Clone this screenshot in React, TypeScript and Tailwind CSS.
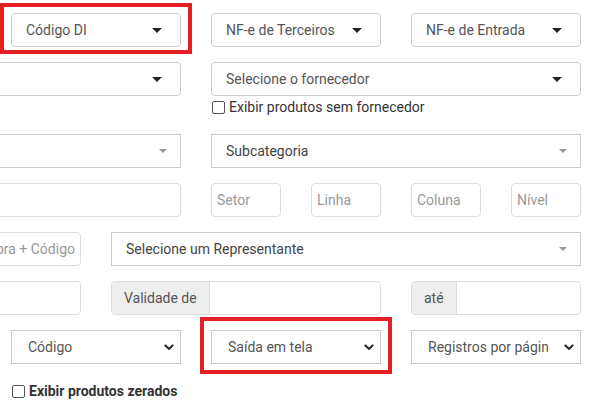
const font = { fontFamily: "Roboto, 'Liberation Sans', sans-serif" };

function Caret() {
  return (
    <svg width="10" height="5" viewBox="0 0 10 5" className="shrink-0">
      <path d="M0 0 L10 0 L5 5 Z" fill="#222" />
    </svg>
  );
}

function SmallCaret() {
  return (
    <svg width="8" height="4" viewBox="0 0 8 4" className="shrink-0">
      <path d="M0 0 L8 0 L4 4 Z" fill="#999" />
    </svg>
  );
}

function Chevron() {
  return (
    <svg width="10" height="7" viewBox="0 0 10 7" className="shrink-0">
      <path d="M1.5 1.5 L5 5 L8.5 1.5" fill="none" stroke="#333" strokeWidth="2.2" strokeLinecap="round" strokeLinejoin="round" />
    </svg>
  );
}

// dropdown with rounded border and solid caret
function Dropdown({ label, span }: { label?: string; span: string }) {
  return (
    <div className={`${span} h-[34px] flex items-center justify-between rounded-[4px] border border-[#ccc] bg-white pl-[14px] pr-[18px] text-[14px] text-[#555]`}>
      <span className="truncate">{label}</span>
      <Caret />
    </div>
  );
}

// select2 style box
function Select2({ label, span }: { label?: string; span: string }) {
  return (
    <div className={`${span} h-[34px] flex items-center justify-between border border-[#ccc] bg-white pl-[14px] pr-[13px] text-[14px] text-[#444]`}>
      <span className="truncate">{label}</span>
      <SmallCaret />
    </div>
  );
}

function Native({ label, span }: { label: string; span: string }) {
  return (
    <div className={`${span} h-[34px] flex items-center justify-between border border-[#ccc] bg-white pl-[16px] pr-[6px] text-[14px] text-[#555]`}>
      <span className="whitespace-nowrap overflow-hidden">{label}</span>
      <span className="pl-[16px]"><Chevron /></span>
    </div>
  );
}

function Input({ placeholder, span, right }: { placeholder?: string; span: string; right?: boolean }) {
  return (
    <div className={`${span} h-[34px] flex items-center overflow-hidden rounded-[4px] border border-[#ddd] bg-white px-[5px] text-[14px] text-[#999] whitespace-nowrap ${right ? "justify-end" : ""}`}>
      {placeholder}
    </div>
  );
}

function Addon({ label, span }: { label: string; span: string }) {
  return (
    <div className={`${span} h-[34px] flex rounded-[4px] border border-[#ddd] bg-white text-[14px] text-[#555]`}>
      <div className="flex items-center rounded-l-[4px] border-r border-[#ddd] bg-[#eee] px-[12px]">{label}</div>
      <div className="flex-1" />
    </div>
  );
}

function Highlight({ children, span, top, bottom }: { children: React.ReactNode; span: string; top: string; bottom: string }) {
  return (
    <div className={`${span} relative flex`}>
      <div className="flex-1 grid grid-cols-[repeat(2,70px)] gap-x-[30px]">{children}</div>
      <span className={`pointer-events-none absolute -left-[11px] -right-[11px] ${top} ${bottom} border-4 border-[#e41f26]`} />
    </div>
  );
}

function CheckBox({ label, bold }: { label: string; bold?: boolean }) {
  return (
    <label className={`flex items-center gap-[4px] text-[14px] ${bold ? "font-bold text-[#333]" : "text-[#333]"}`}>
      <span className="h-[13px] w-[13px] rounded-[2px] border border-[#555] bg-white" />
      {label}
    </label>
  );
}

const row = "grid grid-cols-[repeat(8,70px)] gap-x-[30px] h-[34px]";

export default function App() {
  return (
    <div className="h-[407px] w-[600px] overflow-hidden bg-white" style={font}>
      <div className="ml-[-189px] w-[790px] pt-[13px]">
        <div className={`${row} mb-[15px]`}>
          <Highlight span="col-start-3 col-span-2" top="-top-[10px]" bottom="-bottom-[7px]">
            <Dropdown span="col-span-2" label="Código DI" />
          </Highlight>
          <Dropdown span="col-span-2" label="NF-e de Terceiros" />
          <Dropdown span="col-span-2" label="NF-e de Entrada" />
        </div>

        <div className={row}>
          <Dropdown span="col-start-2 col-span-3" />
          <Dropdown span="col-span-4" label="Selecione o fornecedor" />
        </div>
        <div className="grid grid-cols-[repeat(8,70px)] gap-x-[30px] h-[23px] mb-[15px]">
          <div className="col-start-5 col-span-4 flex items-center -ml-[-1px]">
            <CheckBox label="Exibir produtos sem fornecedor" />
          </div>
        </div>

        <div className={`${row} mb-[15px]`}>
          <Select2 span="col-start-2 col-span-3" />
          <Select2 span="col-span-4" label="Subcategoria" />
        </div>

        <div className={`${row} mb-[15px]`}>
          <Input span="col-start-2 col-span-3" />
          <Input span="" placeholder="Setor" />
          <Input span="" placeholder="Linha" />
          <Input span="" placeholder="Coluna" />
          <Input span="" placeholder="Nível" />
        </div>

        <div className={`${row} mb-[15px]`}>
          <Input span="col-start-2 col-span-2" placeholder="Pedido de Compra + Código" right />
          <Select2 span="col-span-5" label="Selecione um Representante" />
        </div>

        <div className={`${row} mb-[15px]`}>
          <Input span="col-start-2 col-span-2" />
          <Addon span="col-span-3" label="Validade de" />
          <Addon span="col-span-2" label="até" />
        </div>

        <div className={row}>
          <Native span="col-start-3 col-span-2" label="Código" />
          <Highlight span="col-span-2" top="-top-[13px]" bottom="-bottom-[10px]">
            <Native span="col-span-2" label="Saída em tela" />
          </Highlight>
          <Native span="col-span-2" label="Registros por página" />
        </div>

        <div className="grid grid-cols-[repeat(8,70px)] gap-x-[30px] h-[25px] mt-[15px]">
          <div className="col-start-3 col-span-4 flex items-center pl-[1px]">
            <CheckBox label="Exibir produtos zerados" bold />
          </div>
        </div>
      </div>
    </div>
  );
}
